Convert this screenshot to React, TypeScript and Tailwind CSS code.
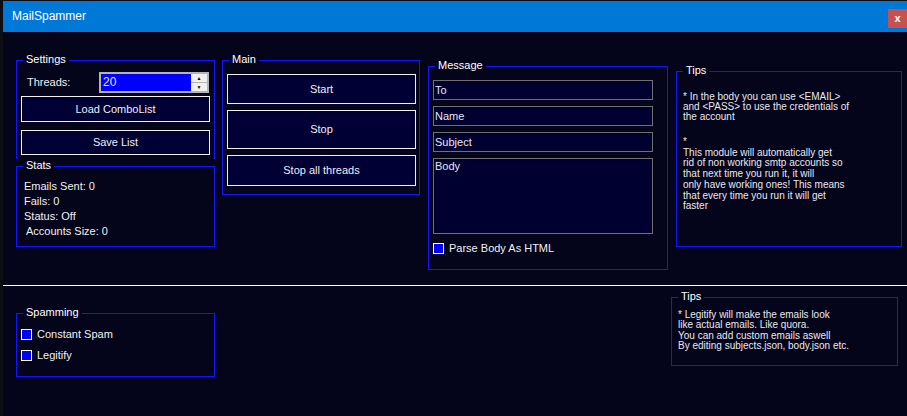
import React from 'react';

const GroupBox: React.FC<{ title: string; className: string; children?: React.ReactNode }> = ({
    title,
    className,
    children,
}) => (
    <div className={`relative border border-[#1414ff] ${className}`}>
        {/* legend sits on the top border */}
        <span className="absolute -top-[8px] left-[6px] bg-[#04041a] px-[3px] text-[11px] leading-[13px] text-white">
            {title}
        </span>
        {children}
    </div>
);

const Btn: React.FC<{ label: string; className: string }> = ({ label, className }) => (
    <button
        className={`flex items-center justify-center border border-[#f0f0f0] bg-[#000034] text-[11px] text-[#eeeef6] ${className}`}
    >
        {label}
    </button>
);

const Field: React.FC<{ text: string; className: string }> = ({ text, className }) => (
    <div className={`border border-[#707070] bg-[#000030] pl-[1px] text-[11px] leading-[13px] text-[#e6e6f0] ${className}`}>
        {text}
    </div>
);

const Check: React.FC<{ label: string; className?: string }> = ({ label, className }) => (
    <div className={`flex items-center gap-[5px] ${className ?? ''}`}>
        <span className="h-[11px] w-[11px] border border-white bg-[#0000ff]" />
        <span className="text-[11px] leading-[13px] text-[#f0f0f0]">{label}</span>
    </div>
);

const tipsTop = [
    '* In the body you can use <EMAIL>',
    'and <PASS> to use the credentials of',
    'the account',
];

const tipsTop2 = [
    '*',
    'This module will automatically get',
    'rid of non working smtp accounts so',
    'that next time you run it, it will',
    'only have working ones! This means',
    'that every time you run it will get',
    'faster',
];

const tipsBottom = [
    '* Legitify will make the emails look',
    'like actual emails. Like quora.',
    'You can add custom emails aswell',
    'By editing subjects.json, body.json etc.',
];

export default function App() {
    return (
        <div
            className="flex h-[416px] w-[907px] overflow-hidden bg-[#0d0d14] pl-[3px] pt-[1px]"
            style={{ fontFamily: '"Liberation Sans", Arial, sans-serif' }}
        >
            <div className="flex flex-1 flex-col bg-[#04041a]">
                {/* Title bar */}
                <div className="flex h-[31px] items-start justify-between bg-[#0078d7]">
                    <span className="pl-[9px] pt-[8px] text-[12px] leading-[14px] text-white">MailSpammer</span>
                    <span className="mt-[8px] flex h-[19px] w-[19px] items-center justify-center bg-[#c75050] text-[11px] font-bold leading-none text-white">
                        x
                    </span>
                </div>

                {/* Top section */}
                <div className="flex h-[253px] items-start pl-[13px]">
                    <div className="mt-[28px] flex w-[199px] flex-col">
                        <GroupBox title="Settings" className="flex h-[99px] flex-col border-b-0">
                            <div className="mt-[11px] flex h-[21px] items-center pl-[10px]">
                                <span className="w-[72px] text-[11px] text-[#f0f0f0]">Threads:</span>
                                <div className="flex h-[21px] w-[110px] border-2 border-[#b4b4b4] bg-[#0000ff]">
                                    <span className="flex-1 pl-[2px] text-[12px] leading-[17px] text-[#e4e4ff]">20</span>
                                    <div className="flex w-[16px] flex-col gap-[1px] bg-[#b4b4b4]">
                                        <span className="flex flex-1 items-center justify-center bg-[#f0f0f0] text-[5px] leading-none text-black">
                                            ▲
                                        </span>
                                        <span className="flex flex-1 items-center justify-center bg-[#f0f0f0] text-[5px] leading-none text-black">
                                            ▼
                                        </span>
                                    </div>
                                </div>
                            </div>
                            <Btn label="Load ComboList" className="ml-[4px] mt-[3px] h-[26px] w-[189px]" />
                            <Btn label="Save List" className="ml-[4px] mt-[8px] h-[25px] w-[189px]" />
                        </GroupBox>

                        <GroupBox title="Stats" className="mt-[7px] h-[81px] pl-[7px] pt-[12px]">
                            <div className="text-[11px] leading-[15px] text-[#f0f0f0]">
                                <div>Emails Sent: 0</div>
                                <div>Fails: 0</div>
                                <div>Status: Off</div>
                                <div className="pl-[2px]">Accounts Size: 0</div>
                            </div>
                        </GroupBox>
                    </div>

                    <GroupBox title="Main" className="ml-[7px] mt-[28px] flex h-[135px] w-[198px] flex-col">
                        <Btn label="Start" className="ml-[4px] mt-[13px] h-[30px] w-[189px]" />
                        <Btn label="Stop" className="ml-[4px] mt-[6px] h-[39px] w-[189px]" />
                        <Btn label="Stop all threads" className="ml-[4px] mt-[6px] h-[31px] w-[189px]" />
                    </GroupBox>

                    <GroupBox title="Message" className="ml-[8px] mt-[34px] flex h-[204px] w-[240px] flex-col pl-[4px]">
                        <Field text="To" className="mt-[13px] flex h-[20px] w-[220px] items-center" />
                        <Field text="Name" className="mt-[6px] flex h-[20px] w-[220px] items-center" />
                        <Field text="Subject" className="mt-[6px] flex h-[20px] w-[220px] items-center" />
                        <Field text="Body" className="mt-[6px] h-[76px] w-[220px] pt-[1px]" />
                        <Check label="Parse Body As HTML" className="mt-[8px]" />
                    </GroupBox>

                    <GroupBox title="Tips" className="ml-[8px] mt-[39px] h-[176px] w-[226px] pl-[6px] pt-[20px]">
                        <div className="text-[10px] leading-[10px] text-[#e8e8f0]">
                            {tipsTop.map((l) => (
                                <div key={l}>{l}</div>
                            ))}
                        </div>
                        <div className="mt-[15px] text-[10px] leading-[10.7px] text-[#e8e8f0]">
                            {tipsTop2.map((l) => (
                                <div key={l}>{l}</div>
                            ))}
                        </div>
                    </GroupBox>
                </div>

                {/* Separator */}
                <div className="h-[1px] bg-white" />

                {/* Bottom section */}
                <div className="flex items-start pl-[13px]">
                    <GroupBox title="Spamming" className="mt-[27px] flex h-[64px] w-[199px] flex-col pl-[4px] pt-[14px]">
                        <Check label="Constant Spam" />
                        <Check label="Legitify" className="mt-[8px]" />
                    </GroupBox>

                    <GroupBox title="Tips" className="ml-[456px] mt-[11px] h-[69px] w-[227px] pl-[6px] pt-[12px]">
                        <div className="text-[10px] leading-[10.3px] text-[#e8e8f0]">
                            {tipsBottom.map((l) => (
                                <div key={l}>{l}</div>
                            ))}
                        </div>
                    </GroupBox>
                </div>
            </div>
        </div>
    );
}
